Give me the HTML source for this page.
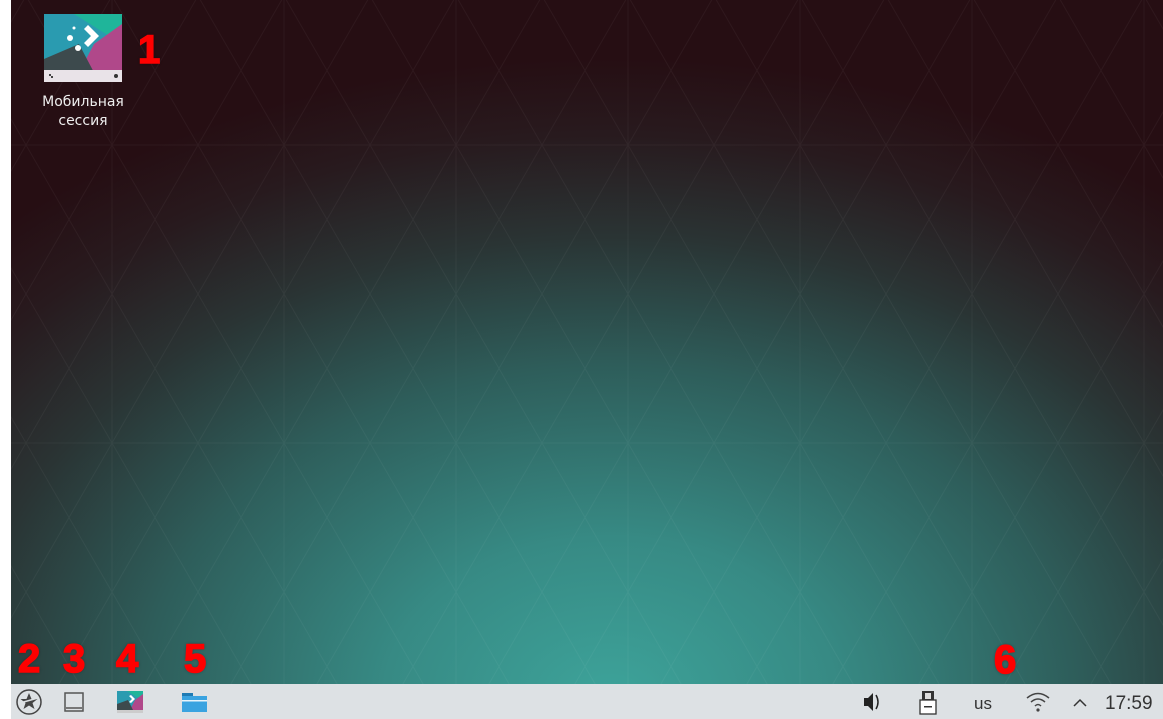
<!DOCTYPE html>
<html><head><meta charset="utf-8"><style>
html,body{margin:0;padding:0;width:1163px;height:719px;overflow:hidden;background:#fff;font-family:"Liberation Sans","DejaVu Sans",sans-serif}
#desk{position:absolute;left:11px;top:0;width:1152px;height:684px;
background:radial-gradient(ellipse 900px 640px at 52% 102%,#3da39a 0%,#378a84 25%,#2e5d5a 52%,#2a3434 72%,#281a1e 88%,#260e13 100%);overflow:hidden}
#panel{position:absolute;left:11px;top:684px;width:1152px;height:35px;background:#dde1e4}
.num{position:absolute;color:#f00;font-weight:900;font-size:40px;font-family:"Liberation Sans",sans-serif;-webkit-text-stroke:1.5px #f00;text-shadow:0 0 3px rgba(0,0,0,.4)}
.lbl{position:absolute;left:28px;top:93px;width:110px;text-align:center;color:#eee;font-size:14px;line-height:19px;font-family:"DejaVu Sans",sans-serif}
</style></head><body>
<div id="desk">
<svg width="1152" height="684" style="position:absolute;left:0;top:0;opacity:.04">
<defs><pattern id="p" width="172" height="298" patternUnits="userSpaceOnUse" x="15" y="-4">
<g stroke="#fff" stroke-width="1" fill="none">
<path d="M0 0L172 298M172 0L0 298M0 149H172M86 0V298M0 0L86 149L172 0M0 298L86 149L172 298M0 149L86 0M86 298L172 149M0 149L86 298M86 0L172 149"/>
</g></pattern></defs>
<rect width="1152" height="684" fill="url(#p)"/>
</svg>
<svg width="78" height="68" style="position:absolute;left:33px;top:14px">
<rect width="78" height="68" fill="#2a9bb0"/>
<polygon points="30,0 78,0 78,30" fill="#1fb59a"/>
<polygon points="78,10 78,68 30,68 50,30" fill="#b0488a"/>
<polygon points="0,68 0,45 35,30 55,68" fill="#3d4a4d"/>
<rect y="56" width="78" height="12" fill="#e9e3e8"/>
<circle cx="72" cy="62" r="2" fill="#333"/>
<rect x="5" y="60" width="2" height="2" fill="#444"/><rect x="7" y="62" width="2" height="2" fill="#444"/>
<polygon points="44,11 55,22 44,33 40,29 47,22 40,15" fill="#fff"/>
<circle cx="26" cy="24" r="3" fill="#fff"/><circle cx="30" cy="14" r="1.5" fill="#fff"/><circle cx="34" cy="34" r="3" fill="#fff"/>
</svg>
<div class="num" style="left:127px;top:28px">1</div>
<div class="num" style="left:7px;top:637px">2</div>
<div class="num" style="left:52px;top:637px">3</div>
<div class="num" style="left:105px;top:637px">4</div>
<div class="num" style="left:173px;top:637px">5</div>
<div class="num" style="left:983px;top:638px">6</div>
</div>
<div class="lbl">Мобильная<br>сессия</div>
<div id="panel">
<svg width="1152" height="35" style="position:absolute;left:-11px;top:0">
<circle cx="29" cy="18" r="12" fill="none" stroke="#444" stroke-width="1.5"/>
<path d="M29 9l2.5 6h6l-5 4 2 6-5.5-3.5-5.5 3.5 2-6-5-4h6z" fill="#444"/>
<path d="M20 19l18-5" stroke="#dde1e4" stroke-width="1.5"/>
<rect x="65" y="9" width="18" height="18" fill="none" stroke="#555" stroke-width="1.5"/>
<rect x="66" y="23" width="16" height="2" fill="#777"/>
<rect x="117" y="7" width="26" height="19" fill="#2a9bb0"/>
<polygon points="127,7 143,7 143,17" fill="#1fb59a"/>
<polygon points="143,10 143,26 130,26 135,16" fill="#b0488a"/>
<polygon points="117,26 117,20 128,16 133,26" fill="#3d4a4d"/>
<rect x="117" y="26" width="26" height="3" fill="#ccc"/>
<polygon points="131,11 135,15 131,19 129,18 132,15 129,12" fill="#fff"/>
<rect x="182" y="9" width="11" height="4" fill="#1f7bb4"/>
<rect x="182" y="12" width="25" height="16" fill="#3aa3e0"/>
<rect x="182" y="16" width="25" height="1.5" fill="#e8f4fb"/>
<path d="M864 14h4l5-5v18l-5-5h-4z" fill="#222"/>
<path d="M876 11q4 7 0 14" stroke="#222" stroke-width="1.5" fill="none"/>
<rect x="922" y="7" width="12" height="10" fill="#333"/><rect x="925" y="9" width="6" height="6" fill="#ddd"/>
<rect x="920" y="16" width="16" height="14" fill="#fff" stroke="#333" stroke-width="1.3"/>
<rect x="924" y="22" width="8" height="1.5" fill="#333"/>
<text x="983" y="25" font-size="17" fill="#333" text-anchor="middle" font-family="Liberation Sans">us</text>
<path d="M1027 14q11-9 22 0M1031 18q7-6 14 0M1035 22q3-3 6 0" stroke="#444" stroke-width="1.5" fill="none"/>
<circle cx="1038" cy="26" r="1.6" fill="#444"/>
<path d="M1074 22l6-6 6 6" stroke="#333" stroke-width="1.5" fill="none"/>
<text x="1105" y="25" font-size="19" fill="#333" font-family="Liberation Sans">17:59</text>
</svg>
</div>
</body></html>
